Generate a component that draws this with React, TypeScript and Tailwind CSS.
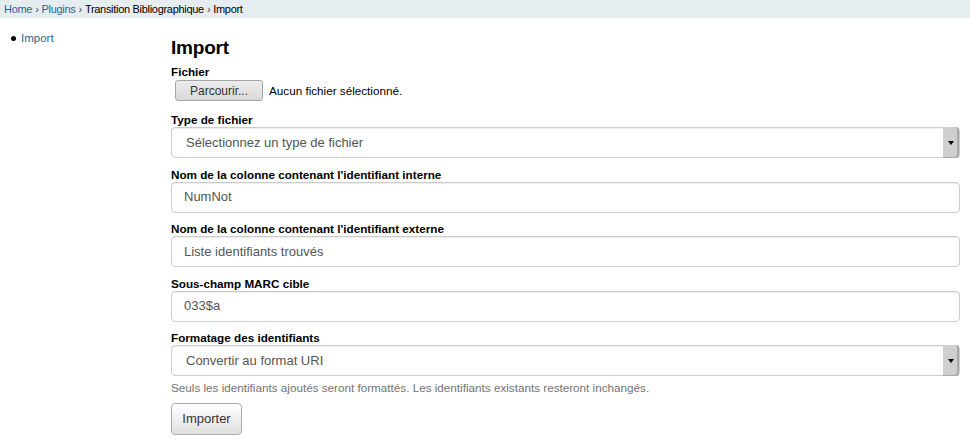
const fields = [
  { label: "Nom de la colonne contenant l'identifiant interne", value: "NumNot" },
  { label: "Nom de la colonne contenant l'identifiant externe", value: "Liste identifiants trouvés" },
  { label: "Sous-champ MARC cible", value: "033$a" },
];

function SelectBox({ value }: { value: string }) {
  return (
    <div className="flex h-[31px] items-stretch rounded-[4px] border border-[#cccccc] bg-white shadow-[inset_0_1px_1px_rgba(0,0,0,0.075)]">
      <div className="flex flex-1 items-center pl-[14px] text-[13px] text-[#555555]">{value}</div>
      <div className="my-[-1px] flex w-[16px] items-center justify-center rounded-r-[3px] bg-[#cfcfcf] shadow-[inset_-2px_-1px_0_#a9a9a9]">
        <span className="block h-0 w-0 border-x-[3px] border-t-[4px] border-x-transparent border-t-black" />
      </div>
    </div>
  );
}

export default function App() {
  return (
    <div className="min-h-[440px] bg-white font-['Liberation_Sans',Arial,sans-serif] text-[#000]">
      <div className="flex h-[18px] items-center bg-[#e6edf1] px-[4px] text-[11px] leading-none tracking-[-0.3px]">
        <a className="text-[#2a6496]">Home</a>
        <span className="mx-[3px] text-[#444]">›</span>
        <a className="text-[#2a6496]">Plugins</a>
        <span className="mx-[3px] text-[#444]">›</span>
        <span>Transition Bibliographique</span>
        <span className="mx-[3px] text-[#444]">›</span>
        <span>Import</span>
      </div>

      <div className="flex">
        <aside className="w-[171px] shrink-0 pt-[13px] pl-[11px]">
          <ul className="text-[11.5px] leading-[14px]">
            <li className="flex items-center gap-[5px]">
              <span className="block h-[5px] w-[5px] rounded-full bg-black" />
              <a className="text-[#2a6496]">Import</a>
            </li>
          </ul>
        </aside>

        <main className="flex-1 pr-[10px] pt-[18px]">
          <h1 className="text-[19px] font-bold leading-[24px] tracking-[-0.2px]">Import</h1>

          <label className="mt-[5px] block text-[11.7px] font-bold leading-[14px]">Fichier</label>
          <div className="mt-[1px] flex items-center">
            <button className="ml-[4px] h-[21px] w-[88px] rounded-[3px] border border-[#a6a6a6] bg-gradient-to-b from-[#ececec] to-[#d9d9d9] text-[12px] text-[#333]">
              Parcourir...
            </button>
            <span className="ml-[6px] text-[11.7px]">Aucun fichier sélectionné.</span>
          </div>

          <label className="mt-[12px] block text-[11.7px] font-bold leading-[14px]">Type de fichier</label>
          <SelectBox value="Sélectionnez un type de fichier" />

          {fields.map((f) => (
            <div key={f.label} className="mt-[9.5px]">
              <label className="block text-[11.7px] font-bold leading-[14px]">{f.label}</label>
              <div className="flex h-[31px] items-center rounded-[4px] border border-[#cccccc] bg-white pl-[12px] text-[13px] text-[#555555] shadow-[inset_0_1px_1px_rgba(0,0,0,0.075)]">
                {f.value}
              </div>
            </div>
          ))}

          <label className="mt-[9.5px] block text-[11.7px] font-bold leading-[14px]">Formatage des identifiants</label>
          <SelectBox value="Convertir au format URI" />
          <p className="mt-[5px] text-[11.7px] leading-[14px] text-[#737373]">
            Seuls les identifiants ajoutés seront formattés. Les identifiants existants resteront inchangés.
          </p>

          <button className="mt-[8px] h-[32px] w-[71px] rounded-[4px] border border-[#adadad] bg-gradient-to-b from-[#ffffff] to-[#e0e0e0] text-[13px] text-[#333]">
            Importer
          </button>
        </main>
      </div>
    </div>
  );
}
